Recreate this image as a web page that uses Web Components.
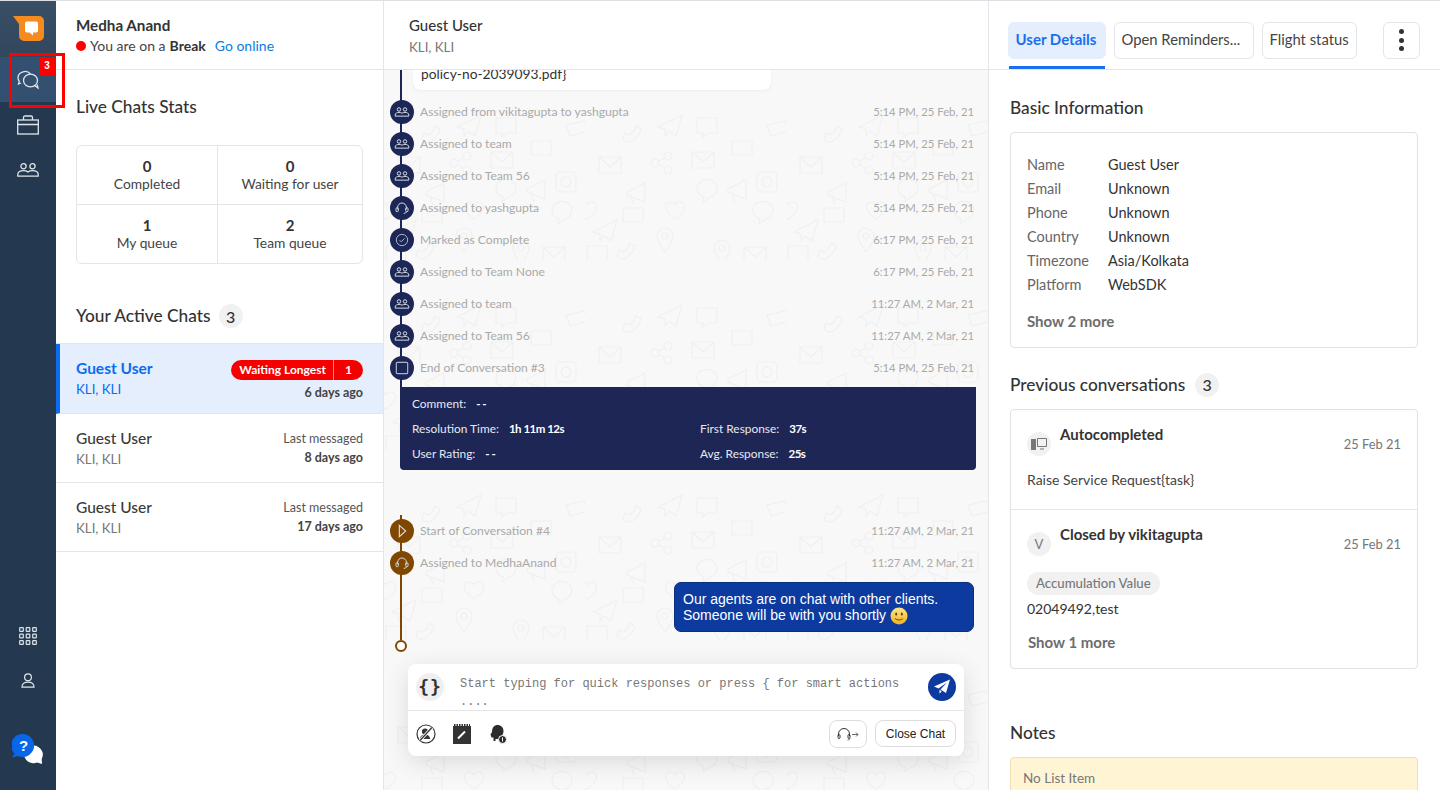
<!DOCTYPE html>
<html>
<head>
<meta charset="utf-8">
<title>Live chats</title>
<style>
  html, body { margin: 0; height: 100%; overflow: hidden; background: #fff; }
  body { font-family: Lato, "Open Sans", sans-serif; color: #333; }
</style>
</head>
<body>
<app-shell>
  <side-rail></side-rail>
  <agent-panel></agent-panel>
  <chat-panel></chat-panel>
  <details-panel></details-panel>
</app-shell>

<script>
// shared icon strokes
const ICONS = {
  group: `<g transform="translate(1 5)"><circle cx="6.500" cy="3.200" r="2.600"/><circle cx="15.500" cy="3.200" r="2.600"/><path d="M.8 11.500c0-2.600 2.400-3.900 5.700-3.900 1.800 0 3.400.4 4.500 1.300 1.100-.9 2.700-1.300 4.500-1.300 3.300 0 5.700 1.300 5.700 3.900v1.700H.8z"/></g>`,
  headset: `<path d="M5.500 14v-3a6.500 6.500 0 0 1 13 0v3"/><rect x="3" y="11.500" width="3.500" height="6" rx="1.500"/><rect x="17.500" y="11.500" width="3.500" height="6" rx="1.500"/><path d="M18.500 17.500c0 1.800-1.500 2.500-4 2.500"/>`,
  check: `<g style="stroke:#aeb2c8"><circle cx="12" cy="12" r="8.500"/><path d="M8.300 12.200l2.600 2.600 4.900-5.200"/></g>`,
  stop: `<rect x="3.500" y="3.500" width="17" height="17" rx="1.500" stroke-width="1.800" style="stroke:#aeb2c8"/>`,
  play: `<path d="M8 3.500l9.500 8.500L8 20.500z" stroke-width="1.700"/>`
};

class AppShell extends HTMLElement {
  connectedCallback() {
    this.attachShadow({ mode: "open" });
    this.shadowRoot.innerHTML = `
      <style>
        :host { display: flex; position: relative; width: 1440px; height: 790px; overflow: hidden; }
        ::slotted(side-rail) { flex: 0 0 56px; }
        ::slotted(agent-panel) { flex: 0 0 328px; }
        ::slotted(chat-panel) { flex: 0 0 605px; }
        ::slotted(details-panel) { flex: 1 1 0; }
        .line { position: absolute; left: 0; right: 0; top: 0; height: 1px; background: #dcdfe3; z-index: 5; }
        /* annotation drawn over the page in the screenshot */
        .mark { position: absolute; left: 9px; top: 53px; width: 50px; height: 49px; border: 3px solid #f00; z-index: 6; pointer-events: none; }
      </style>
      <slot></slot>
      <div class="line"></div>
      <div class="mark"></div>
    `;
  }
}

class SideRail extends HTMLElement {
  connectedCallback() {
    this.attachShadow({ mode: "open" });
    this.shadowRoot.innerHTML = `
      <style>
        :host { display: flex; flex-direction: column; height: 790px; background: #24394f; }
        .logo { height: 57px; display: flex; justify-content: center; padding: 15px 0 0 2px; box-sizing: border-box; background: linear-gradient(#3a4f65, #31475d); }
        .item { height: 45px; display: flex; align-items: center; justify-content: center; position: relative; }
        .item.active { background: #345070; }
        .item svg { fill: none; stroke: #dfe5ea; stroke-width: 1.3; }
        .badge { position: absolute; left: 39px; top: 0; width: 16px; height: 18px; background: #f00; color: #fff; font: 700 10px/18px "Liberation Sans", sans-serif; text-align: center; }
        .spacer { flex: 1; }
        .small { height: 45px; display: flex; justify-content: center; align-items: center; }
        .small svg { fill: none; stroke: #dfe5ea; stroke-width: 1.2; }
        .help { flex: none; height: 57px; margin-top: 30px; position: relative; }
        .help svg { position: absolute; left: 12px; top: 1px; }
        .q { position: absolute; left: 12px; top: 4px; width: 23px; text-align: center; color: #fff; font: 700 15px/17px "Liberation Sans", sans-serif; }
      </style>
      <div class="logo">
        <svg width="32" height="27" viewBox="0 0 32 27">
          <path d="M0 1h26a5 5 0 0 1 5 5v15a5 5 0 0 1-5 5H11a5 5 0 0 1-5-5V9z" fill="#f58a1f"/>
          <path d="M12 8.500a2 2 0 0 1 2-2h9a2 2 0 0 1 2 2v7a2 2 0 0 1-2 2h-3v3l-3.500-3H14a2 2 0 0 1-2-2z" fill="#fff"/>
        </svg>
      </div>
      <div class="item active">
        <svg width="22" height="20" viewBox="0 0 22 20"><path d="M13.500 4A7 6.500 0 0 0 1 7.500c0 1.400.5 2.700 1.200 3.700L1.500 14l2.600-1"/><ellipse cx="13.500" cy="10.500" rx="7" ry="6.300"/><path d="M17.500 15.500l3.500 2.500-.8-3.500"/></svg>
        <span class="badge">3</span>
      </div>
      <div class="item">
        <svg width="22" height="20" viewBox="0 0 22 20"><rect x=".7" y="5" width="20.600" height="14"/><path d="M.7 9.500h20.600M6.500 5V2.500q0-1.500 1.500-1.500h6q1.500 0 1.500 1.500V5"/></svg>
      </div>
      <div class="item">
        <svg width="24" height="24" viewBox="0 0 24 24">${ICONS.group}</svg>
      </div>
      <div class="spacer"></div>
      <div class="small">
        <svg width="18" height="18" viewBox="0 0 18 18">
          ${[0, 6.5, 13].map(y => [0, 6.5, 13].map(x => `<rect x="${x + .7}" y="${y + .7}" width="3.600" height="3.600" rx=".6"/>`).join("")).join("")}
        </svg>
      </div>
      <div class="small">
        <svg width="14" height="15" viewBox="0 0 14 15"><circle cx="7" cy="4.300" r="3.400"/><path d="M1 14.200c0-3.400 2-5 6-5s6 1.600 6 5z"/></svg>
      </div>
      <div class="help">
        <svg width="32" height="32" viewBox="0 0 32 32">
          <path d="M12 21a9.500 9.500 0 0 1 18.500-3c.7 2.500.3 4.800-.8 6.800L30 30l-4.800-1.600A9.500 9.500 0 0 1 12 21z" fill="#fff"/>
          <path d="M.3 23.500l2.100-4A11.500 11.500 0 1 1 6 22z" fill="#0a66e8"/>
        </svg>
        <span class="q">?</span>
      </div>
    `;
  }
}

class StatCell extends HTMLElement {
  connectedCallback() {
    this.attachShadow({ mode: "open" });
    this.shadowRoot.innerHTML = `
      <style>
        :host { display: block; text-align: center; padding-top: 12px; box-sizing: border-box; }
        b { display: block; font-size: 15px; line-height: 17px; font-weight: 700; color: #333; }
        span { display: block; font-size: 13.800px; line-height: 18px; color: #444; }
      </style>
      <b>${this.getAttribute("value")}</b><span>${this.getAttribute("label")}</span>
    `;
  }
}

class ChatRow extends HTMLElement {
  connectedCallback() {
    this.attachShadow({ mode: "open" });
    const active = this.hasAttribute("active");
    this.shadowRoot.innerHTML = `
      <style>
        :host { display: flex; justify-content: space-between; box-sizing: border-box; height: 69px; padding: 14px 20px 0 20px; border-bottom: 1px solid #e3e5e8; }
        :host([active]) { height: 70px; background: #e4eefc; border-left: 4px solid #0a6cf0; padding-left: 16px; }
        .name { font-size: 15.500px; line-height: 20px; font-weight: ${active ? 700 : 500}; color: ${active ? "#0a6cf0" : "#3a3a3a"}; }
        .place { font-size: 13.300px; line-height: 20px; margin-top: 1px; color: ${active ? "#0a6cf0" : "#777"}; }
        .side { text-align: right; font-size: 12.500px; }
        .note { line-height: 16px; color: #555; margin-top: 3px; }
        .ago { line-height: 16px; margin-top: 3px; font-weight: 700; color: #444; }
        .pill { display: inline-flex; height: 20px; margin-top: 2px; border-radius: 10px; background: #f50000; color: #fff; font-size: 12px; font-weight: 700; line-height: 20px; }
        .pill i { font-style: normal; padding: 0 7px 0 8px; border-right: 1px solid #ff8a8a; }
        .pill u { text-decoration: none; width: 29px; text-align: center; }
      </style>
      <div><div class="name">Guest User</div><div class="place">KLI, KLI</div></div>
      <div class="side">
        ${active ? `<div class="pill"><i>Waiting Longest</i><u>1</u></div>` : `<div class="note">Last messaged</div>`}
        <div class="ago" ${active ? 'style="margin-top:5px"' : ""}>${this.getAttribute("ago")}</div>
      </div>
    `;
  }
}

class CountBadge extends HTMLElement {
  connectedCallback() {
    this.attachShadow({ mode: "open" });
    this.shadowRoot.innerHTML = `
      <style>
        :host { display: inline-flex; width: 24px; height: 24px; border-radius: 50%; background: #f1f1f1; align-items: center; justify-content: center; font-size: 16px; font-weight: 500; color: #333; margin-left: 8px; }
      </style><slot></slot>`;
  }
}

class AgentPanel extends HTMLElement {
  connectedCallback() {
    this.attachShadow({ mode: "open" });
    this.shadowRoot.innerHTML = `
      <style>
        :host { display: flex; flex-direction: column; box-sizing: border-box; border-right: 1px solid #e3e5e8; height: 790px; background: #fff; }
        .head { height: 70px; box-sizing: border-box; padding: 15px 20px 0; border-bottom: 1px solid #e3e5e8; }
        .me { font-size: 15.200px; line-height: 20px; font-weight: 700; color: #333; }
        .status { display: flex; align-items: center; font-size: 14px; line-height: 20px; margin-top: 1px; color: #444; }
        .dot { width: 10px; height: 10px; border-radius: 50%; background: #f00; margin-right: 4px; }
        .status b { margin-left: 4px; color: #333; }
        .status a { margin-left: 9px; color: #0a7be0; }
        h2 { margin: 0; font-size: 17.300px; line-height: 24px; font-weight: 500; color: #333; }
        .stats-title { padding: 25px 20px 0; }
        .stats { display: grid; grid-template-columns: 141px 1fr; grid-template-rows: 59px 58px; margin: 26px 20px 0; border: 1px solid #e3e5e8; border-radius: 6px; }
        stat-cell:nth-child(odd) { border-right: 1px solid #e3e5e8; }
        stat-cell:nth-child(-n+2) { border-bottom: 1px solid #e3e5e8; }
        .active-title { display: flex; align-items: center; padding: 40px 20px 15px; border-bottom: 1px solid #e3e5e8; }
      </style>
      <div class="head">
        <div class="me">Medha Anand</div>
        <div class="status"><span class="dot"></span>You are on a <b>Break</b><a>Go online</a></div>
      </div>
      <h2 class="stats-title">Live Chats Stats</h2>
      <div class="stats">
        <stat-cell value="0" label="Completed"></stat-cell>
        <stat-cell value="0" label="Waiting for user"></stat-cell>
        <stat-cell value="1" label="My queue"></stat-cell>
        <stat-cell value="2" label="Team queue"></stat-cell>
      </div>
      <div class="active-title"><h2>Your Active Chats</h2><count-badge>3</count-badge></div>
      <chat-row active ago="6 days ago"></chat-row>
      <chat-row ago="8 days ago"></chat-row>
      <chat-row ago="17 days ago"></chat-row>
    `;
  }
}

class TlEvent extends HTMLElement {
  connectedCallback() {
    this.attachShadow({ mode: "open" });
    this.shadowRoot.innerHTML = `
      <style>
        :host { display: flex; align-items: center; height: 32px; position: relative; color: #a9a9a9; font-size: 12.100px; padding-right: 14px; --c: #1d2757; }
        :host([brown]) { --c: #7f4700; }
        .stem { position: absolute; left: 16px; top: 0; bottom: 0; width: 2px; background: var(--c); }
        .node { position: relative; width: 24px; height: 24px; border-radius: 50%; background: var(--c); margin: 0 6px; flex: none; display: flex; align-items: center; justify-content: center; }
        .node svg { width: 16px; height: 16px; fill: none; stroke: #d8dbe6; stroke-width: 1.500; }
        .text { flex: 1; position: relative; margin-bottom: 2px; }
        .time { position: relative; font-size: 11.300px; margin-bottom: 2px; }
      </style>
      <div class="stem"></div>
      <div class="node"><svg viewBox="0 0 24 24">${ICONS[this.getAttribute("icon")]}</svg></div>
      <div class="text">${this.getAttribute("text")}</div>
      <div class="time">${this.getAttribute("time")}</div>
    `;
  }
}

class ChatPattern extends HTMLElement {
  connectedCallback() {
    this.attachShadow({ mode: "open" });
    const G = {
      plane: `<path d="M-12 2L12-10 6 11-1 6-5 11-5 4z"/>`,
      sq: `<path d="M-10-9h20v15H1l-5 4V6h-6z"/>`,
      card: `<path d="M-11-5l18-4 4 10-18 5z"/>`,
      dots: `<path d="M-10-7h20V7h-20z"/><path d="M-4 0h1M0 0h1M4 0h1"/>`,
      env: `<path d="M-11-8H11V8H-11zM-11-8L0 2 11-8"/>`,
      share: `<circle cx="-7" cy="0" r="4"/><circle cx="6" cy="-7" r="4"/><circle cx="6" cy="7" r="4"/><path d="M-3-2l6-3M-3 2l6 3"/>`,
      insta: `<rect x="-10" y="-10" width="20" height="20" rx="4"/><circle r="5"/>`,
      bubble: `<path d="M-3 9A10 9 0 1 1 3 9L-4 14z"/>`,
      mega: `<path d="M-10-1L8-10V9L-10 2zM-6 3l3 9"/>`,
      heart: `<path d="M0 9C-14 0-10-9-4-8c2 0 3 1 4 3 1-2 2-3 4-3C10-9 14 0 0 9z"/>`,
      pin: `<path d="M0 12C-6 4-8 0-8-4a8 8 0 0 1 16 0c0 4-2 8-8 16z"/><circle cy="-4" r="3"/>`,
      phone: `<path d="M-10 6c2 3 6 4 9 2 4-2 8-7 9-12l-5-3-2 5c-2 2-3 3-5 4l-4-2z"/>`
    };
    const items = [["plane",85,55],["sq",122,57],["phone",48,63],["card",193,60],["dots",157,78],["env",118,90],["share",77,93],["env",25,95],["insta",182,112],["bubble",122,118],["mega",153,120],["mega",52,123],["heart",90,140],["bubble",178,140],["heart",2,140],["plane",20,160],["dots",48,145],["pin",80,170],["phone",42,180],["sq",12,185],["pin",137,182],["env",170,185]];
    this.shadowRoot.innerHTML = `
      <style>
        :host { display: block; position: absolute; inset: 0; }
        svg { display: block; width: 100%; height: 100%; }
      </style>
      <svg>
        <defs>
          <pattern id="p" width="201" height="190" patternUnits="userSpaceOnUse">
            <g fill="none" stroke="#f0f0f0" stroke-width="1.200">
              ${items.map(([n, x, y]) => `<g transform="translate(${x} ${y})">${G[n]}</g>`).join("")}
            </g>
          </pattern>
        </defs>
        <rect width="100%" height="100%" fill="#f8f8f8"/>
        <rect width="100%" height="100%" fill="url(#p)"/>
      </svg>
    `;
  }
}

class ChatSummary extends HTMLElement {
  connectedCallback() {
    this.attachShadow({ mode: "open" });
    this.shadowRoot.innerHTML = `
      <style>
        :host { display: grid; grid-template-columns: 288px 1fr; grid-auto-rows: 25px; position: relative; box-sizing: border-box; width: 576px; height: 83px; margin-left: 16px; padding: 4px 12px; background: #1d2655; color: #e6e8f0; font-size: 11.900px; line-height: 25px; border-radius: 0 0 4px 4px; }
        b { margin-left: 10px; color: #fff; font-size: 11.500px; letter-spacing: -.5px; }
      </style>
      <div>Comment:<b>- -</b></div><div></div>
      <div>Resolution Time:<b>1h 11m 12s</b></div><div>First Response:<b>37s</b></div>
      <div>User Rating:<b>- -</b></div><div>Avg. Response:<b>25s</b></div>
    `;
  }
}

class ComposerBox extends HTMLElement {
  connectedCallback() {
    this.attachShadow({ mode: "open" });
    this.shadowRoot.innerHTML = `
      <style>
        :host { display: block; position: relative; width: 556px; height: 92px; margin-left: 24px; background: #fff; border-radius: 8px; box-shadow: 0 6px 24px rgba(0,0,0,.12); }
        .top { display: flex; height: 47px; box-sizing: border-box; padding: 9px 8px 0; border-bottom: 1px solid #e6e6e6; }
        .braces { width: 28px; height: 28px; border-radius: 50%; background: #efefef; flex: none; text-align: center; font: 700 18px/27px "DejaVu Sans Mono", monospace; letter-spacing: 1px; color: #333; }
        .input { flex: 1; margin-left: 16px; font: 12px/18px "Liberation Mono", monospace; color: #777; padding-top: 2px; overflow: hidden; height: 36px; }
        .send { width: 28px; height: 28px; border-radius: 50%; background: #0c3a9e; flex: none; display: flex; align-items: center; justify-content: center; }
        .bottom { display: flex; align-items: center; height: 45px; padding: 0 8px; }
        .tool { margin-right: 16px; display: block; }
        .grow { flex: 1; }
        .btn { display: flex; align-items: center; justify-content: center; box-sizing: border-box; height: 27px; border: 1px solid #ddd; border-radius: 8px; background: #fff; font: 12px "Liberation Sans", sans-serif; color: #222; }
        .route { width: 38px; height: 28px; margin-right: 8px; }
        .close { width: 81px; }
      </style>
      <div class="top">
        <div class="braces">{}</div>
        <div class="input">Start typing for quick responses or press { for smart actions ....</div>
        <div class="send">
          <svg width="18" height="18" viewBox="0 0 18 18"><path d="M17 1.500L1 8.500l4.500 2L14 4.500 7.500 11.500l5.500 3.500zM6.500 11.800v4l2.200-2.600z" fill="#fff"/></svg>
        </div>
      </div>
      <div class="bottom">
        <svg class="tool" width="20" height="20" viewBox="0 0 20 20" fill="none" stroke="#333" stroke-width="1.200" style="margin-right:17px">
          <circle cx="10" cy="10" r="9"/><circle cx="9" cy="7.500" r="2.500" fill="#333"/><path d="M4.500 14.500c.5-2.500 2.500-3.500 4.500-3.500 2 0 4 1 4.500 3.500z" fill="#333"/><path d="M16 3.500L4 16.500" stroke="#fff" stroke-width="3"/><path d="M16 3.500L4 16.500" stroke-width="1.200"/>
        </svg>
        <svg class="tool" width="18" height="20" viewBox="0 0 18 20" style="margin-right:18px">
          <rect y="2" width="18" height="18" fill="#333"/><path d="M1 1h16" stroke="#333" stroke-dasharray="1.500 1" stroke-width="2"/><path d="M5 14.500l7-7" stroke="#fff" stroke-width="2"/>
        </svg>
        <svg class="tool" width="18" height="20" viewBox="0 0 18 20">
          <path d="M1.500 10.500l1.500-2.500C3 3.500 5.500 1 8.500 1c3.500 0 6 2.500 6 6 0 2-.8 3.500-1.500 4.500V15H6.500v2H4.500v-3.500H2.500z" fill="#2c2c2c"/><circle cx="13.500" cy="15.500" r="4" fill="#2c2c2c" stroke="#fff"/><path d="M13.500 13.500v4" stroke="#fff"/>
        </svg>
        <div class="grow"></div>
        <div class="btn route">
          <svg width="22" height="14" viewBox="0 0 22 14" fill="none" stroke="#333" stroke-width="1"><path d="M1.500 9V7a5.500 5.500 0 0 1 11 0v2"/><rect x="1" y="7.500" width="2" height="4" rx="1"/><rect x="11" y="7.500" width="2" height="4" rx="1"/><path d="M13 11.500c0 1-.8 1.500-2.500 1.500M15 7.500h6M19 5.500l2 2-2 2" stroke="#666"/></svg>
        </div>
        <div class="btn close">Close Chat</div>
      </div>
    `;
  }
}

class ChatPanel extends HTMLElement {
  connectedCallback() {
    this.attachShadow({ mode: "open" });
    const ev = (icon, text, time, brown) => `<tl-event icon="${icon}" text="${text}" time="${time}" ${brown ? "brown" : ""}></tl-event>`;
    this.shadowRoot.innerHTML = `
      <style>
        :host { display: flex; flex-direction: column; box-sizing: border-box; height: 790px; border-right: 1px solid #e3e5e8; background: #fff; }
        .head { flex: none; display: flex; flex-direction: column; justify-content: center; height: 70px; box-sizing: border-box; padding: 3px 25px 0; border-bottom: 1px solid #e3e5e8; background: #fff; position: relative; z-index: 2; }
        .who { font-size: 15px; line-height: 21px; font-weight: 500; color: #333; }
        .where { font-size: 13.300px; line-height: 20px; color: #777; margin-top: 1px; }
        .body { flex: 1; position: relative; overflow: hidden; display: flex; flex-direction: column; }
        .scroll { position: relative; display: flex; flex-direction: column; flex: 1; }
        .msg-card { position: relative; height: 20px; padding-left: 16px; }
        .msg-card .stem { position: absolute; left: 16px; top: 0; bottom: 0; width: 2px; background: #1d2757; }
        .card { position: relative; box-sizing: border-box; width: 358px; height: 20px; margin-left: 13px; padding: 0 8px; background: #fff; border-radius: 0 0 8px 8px; box-shadow: 0 1px 3px rgba(0,0,0,.05); font-size: 13.800px; line-height: 7px; color: #333; overflow: hidden; }
        .gap8 { position: relative; height: 6px; }
        .gap8 i { position: absolute; left: 16px; top: 0; bottom: 0; width: 2px; background: #1d2757; }
        .stemfill { position: relative; height: 3px; }
        .stemfill i { position: absolute; left: 16px; top: 0; bottom: 0; width: 2px; background: #1d2757; }
        .pause { height: 45px; }
        .bubble-row { position: relative; height: 61px; padding-top: 3px; box-sizing: border-box; display: flex; justify-content: flex-end; padding-right: 14px; }
        .bubble-row i { position: absolute; left: 16px; top: 0; bottom: 0; width: 2px; background: #7f4700; }
        .bubble { width: 300px; height: 50px; box-sizing: border-box; padding: 8px; background: #0c3a9e; border: 1px solid #08307f; border-radius: 7px; color: #fff; font: 14px/16px "Liberation Sans", sans-serif; position: relative; }
        .bubble svg { vertical-align: middle; margin: -3px 0; }
        .end { width: 8px; height: 8px; margin-left: 11px; border: 2px solid #7f4700; border-radius: 50%; background: #fff; position: relative; }
      </style>
      <div class="head">
        <div class="who">Guest User</div>
        <div class="where">KLI, KLI</div>
      </div>
      <div class="body">
        <chat-pattern></chat-pattern>
        <div class="scroll">
          <div class="msg-card"><div class="stem"></div><div class="card">policy-no-2039093.pdf}</div></div>
          <div class="gap8"><i></i></div>
          ${ev("group", "Assigned from vikitagupta to yashgupta", "5:14 PM, 25 Feb, 21")}
          ${ev("group", "Assigned to team", "5:14 PM, 25 Feb, 21")}
          ${ev("group", "Assigned to Team 56", "5:14 PM, 25 Feb, 21")}
          ${ev("headset", "Assigned to yashgupta", "5:14 PM, 25 Feb, 21")}
          ${ev("check", "Marked as Complete", "6:17 PM, 25 Feb, 21")}
          ${ev("group", "Assigned to Team None", "6:17 PM, 25 Feb, 21")}
          ${ev("group", "Assigned to team", "11:27 AM, 2 Mar, 21")}
          ${ev("group", "Assigned to Team 56", "11:27 AM, 2 Mar, 21")}
          ${ev("stop", "End of Conversation #3", "5:14 PM, 25 Feb, 21")}
          <div class="stemfill"><i></i></div>
          <chat-summary></chat-summary>
          <div class="pause"></div>
          ${ev("play", "Start of Conversation #4", "11:27 AM, 2 Mar, 21", true)}
          ${ev("headset", "Assigned to MedhaAnand", "11:27 AM, 2 Mar, 21", true)}
          <div class="bubble-row"><i></i>
            <div class="bubble">Our agents are on chat with other clients. Someone will be with you shortly
              <svg width="18" height="18" viewBox="0 0 18 18"><defs><linearGradient id="s" x1="0" y1="0" x2="0" y2="1"><stop offset="0" stop-color="#fde58a"/><stop offset="1" stop-color="#f2b21a"/></linearGradient></defs><circle cx="9" cy="9" r="8.500" fill="url(#s)"/><ellipse cx="6.200" cy="7" rx="1" ry="1.500" fill="#5b3a10"/><ellipse cx="11.800" cy="7" rx="1" ry="1.500" fill="#5b3a10"/><path d="M5 11.500c2 2 6 2 8 0" fill="none" stroke="#7b4d10"/></svg>
            </div>
          </div>
          <div class="end"></div>
          <div style="height:12px"></div>
          <composer-box></composer-box>
        </div>
      </div>
    `;
  }
}

class InfoCard extends HTMLElement {
  connectedCallback() {
    this.attachShadow({ mode: "open" });
    this.shadowRoot.innerHTML = `
      <style>
        :host { display: block; box-sizing: border-box; border: 1px solid #e0e2e5; border-radius: 4px; background: #fff; }
      </style><slot></slot>`;
  }
}

class DetailsPanel extends HTMLElement {
  connectedCallback() {
    this.attachShadow({ mode: "open" });
    const rows = [["Name", "Guest User"], ["Email", "Unknown"], ["Phone", "Unknown"], ["Country", "Unknown"], ["Timezone", "Asia/Kolkata"], ["Platform", "WebSDK"]];
    this.shadowRoot.innerHTML = `
      <style>
        :host { display: block; height: 790px; overflow: hidden; background: #fff; }
        nav { display: flex; align-items: flex-start; height: 70px; box-sizing: border-box; padding: 22px 20px 0 19px; border-bottom: 1px solid #e3e5e8; }
        .tab { box-sizing: border-box; height: 37px; border: 1px solid #e3e5e8; border-radius: 6px; padding: 0 7px 0 6.500px; margin-right: 8px; font-size: 14.800px; line-height: 33px; color: #444; white-space: nowrap; }
        .tab.on { position: relative; border-color: #e4eefc; background: #e4eefc; color: #1a6ff0; font-weight: 700; width: 98px; font-size: 15px; }
        .tab.on::after { content: ""; position: absolute; left: 0; right: 0; top: 43px; height: 3px; background: #1a6ff0; }
        .more { width: 37px; margin-left: 26px; margin-right: 0; padding: 6px 0 0; display: flex; flex-direction: column; align-items: center; gap: 3.500px; }
        .more i { width: 5px; height: 5px; border-radius: 50%; background: #333; }
        section { padding: 0 22px 0 21px; }
        h2 { display: flex; align-items: center; margin: 0; font-size: 17.300px; line-height: 24px; font-weight: 500; color: #333; height: 24px; }
        .basic { margin-top: 12px; height: 216px; padding: 20px 16px 0; }
        .grid { display: grid; grid-template-columns: 81px 1fr; grid-auto-rows: 24px; font-size: 14.500px; line-height: 23px; }
        .grid span { color: #666; }
        .grid b { font-weight: 400; color: #333; }
        .show { font-size: 15px; font-weight: 700; color: #6d6d6d; line-height: 20px; }
        .prev { margin-top: 12px; height: 260px; }
        .conv { box-sizing: border-box; display: grid; grid-template-columns: 33px 1fr auto; align-content: start; padding: 0 16px; }
        .conv + .conv { border-top: 1px solid #e3e5e8; }
        .av { width: 24px; height: 24px; border-radius: 50%; background: #f1f1f1; margin-top: 22px; display: flex; align-items: center; justify-content: center; font-size: 13px; color: #777; }
        .t { font-size: 15px; font-weight: 700; color: #333; line-height: 20px; margin-top: 14px; }
        .d { font-size: 12.900px; color: #777; line-height: 20px; margin-top: 24px; }
        .desc { grid-column: 1 / -1; font-size: 14px; line-height: 20px; color: #444; margin-top: 14px; }
        .tag { justify-self: start; grid-column: 1 / -1; margin-top: 16px; height: 23px; padding: 0 9px; border-radius: 12px; background: #f1f1f1; font-size: 13.200px; line-height: 23px; font-weight: 500; color: #777; }
        .val { grid-column: 1 / -1; font-size: 14px; line-height: 20px; margin-top: 4px; color: #333; }
        .notes { margin-top: 52px; }
        .yellow { margin-top: 12px; height: 60px; box-sizing: border-box; padding: 10px 12px; background: #fff5d4; border: 1px solid #eee0b0; border-radius: 4px; font-size: 13.500px; line-height: 20px; color: #777; }
      </style>
      <nav>
        <div class="tab on">User Details</div>
        <div class="tab" style="width:140px">Open Reminders...</div>
        <div class="tab" style="width:95px;margin-right:0">Flight status</div>
        <div class="tab more"><i></i><i></i><i></i></div>
      </nav>
      <section style="padding-top:26px">
        <h2>Basic Information</h2>
        <info-card class="basic">
          <div class="grid">${rows.map(([k, v]) => `<span>${k}</span><b>${v}</b>`).join("")}</div>
          <div class="show" style="margin-top:14px">Show 2 more</div>
        </info-card>
      </section>
      <section style="padding-top:25px">
        <h2>Previous conversations<count-badge style="margin-left:10px">3</count-badge></h2>
        <info-card class="prev">
          <div class="conv" style="height:99px">
            <div class="av">
              <svg width="16" height="14" viewBox="0 0 16 14"><rect x="0" y="2" width="5" height="11" fill="#777"/><path d="M6.500 1.500h9v8h-9z" fill="none" stroke="#777"/><path d="M9 12h4" stroke="#777"/></svg>
            </div>
            <div class="t">Autocompleted</div>
            <div class="d">25 Feb 21</div>
            <div class="desc">Raise Service Request{task}</div>
          </div>
          <div class="conv">
            <div class="av">V</div>
            <div class="t">Closed by vikitagupta</div>
            <div class="d">25 Feb 21</div>
            <div class="tag">Accumulation Value</div>
            <div class="val">02049492,test</div>
            <div class="show" style="grid-column:1/-1;margin:13px 0 0 1px">Show 1 more</div>
          </div>
        </info-card>
      </section>
      <section class="notes">
        <h2>Notes</h2>
        <div class="yellow">No List Item</div>
      </section>
    `;
  }
}

customElements.define("app-shell", AppShell);
customElements.define("side-rail", SideRail);
customElements.define("stat-cell", StatCell);
customElements.define("chat-row", ChatRow);
customElements.define("count-badge", CountBadge);
customElements.define("agent-panel", AgentPanel);
customElements.define("tl-event", TlEvent);
customElements.define("chat-pattern", ChatPattern);
customElements.define("chat-summary", ChatSummary);
customElements.define("composer-box", ComposerBox);
customElements.define("chat-panel", ChatPanel);
customElements.define("info-card", InfoCard);
customElements.define("details-panel", DetailsPanel);
</script>
</body>
</html>
